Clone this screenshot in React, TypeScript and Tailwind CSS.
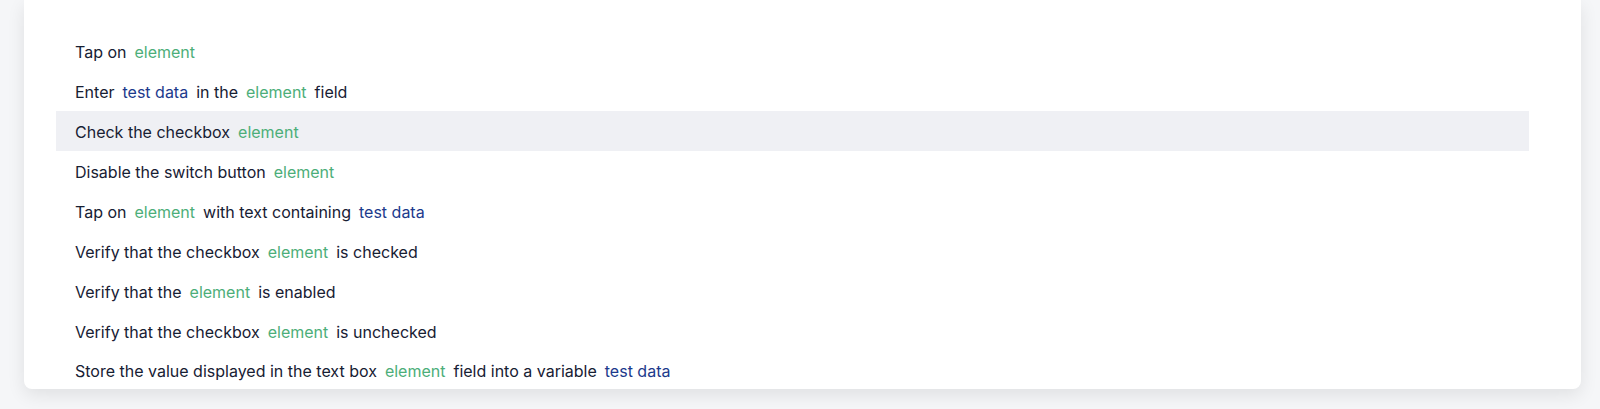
type Part = { t: string; k?: 'el' | 'data' };

const steps: Part[][] = [
  [{ t: 'Tap on' }, { t: 'element', k: 'el' }],
  [{ t: 'Enter' }, { t: 'test data', k: 'data' }, { t: 'in the' }, { t: 'element', k: 'el' }, { t: 'field' }],
  [{ t: 'Check the checkbox' }, { t: 'element', k: 'el' }],
  [{ t: 'Disable the switch button' }, { t: 'element', k: 'el' }],
  [{ t: 'Tap on' }, { t: 'element', k: 'el' }, { t: 'with text containing' }, { t: 'test data', k: 'data' }],
  [{ t: 'Verify that the checkbox' }, { t: 'element', k: 'el' }, { t: 'is checked' }],
  [{ t: 'Verify that the' }, { t: 'element', k: 'el' }, { t: 'is enabled' }],
  [{ t: 'Verify that the checkbox' }, { t: 'element', k: 'el' }, { t: 'is unchecked' }],
  [
    { t: 'Store the value displayed in the text box' },
    { t: 'element', k: 'el' },
    { t: 'field into a variable' },
    { t: 'test data', k: 'data' },
  ],
];

function StepRow({ parts, active, last }: { parts: Part[]; active?: boolean; last?: boolean }) {
  return (
    <div
      className={`flex items-center pl-[19px] pt-px whitespace-pre text-[16px] text-[#172033] ${last ? 'h-[38px]' : 'h-10'} ${
        active ? 'bg-[#eff0f4]' : ''
      }`}
    >
      {parts.map((p, i) => {
        const sep = i > 0 ? ' ' : '';
        if (!p.k) return <span key={i}>{sep + p.t}</span>;
        return (
          <span key={i}>
            {sep}
            <span className={`px-[3.5px] ${p.k === 'el' ? 'text-[#4cae79]' : 'text-[#1c3a8c]'}`}>{p.t}</span>
          </span>
        );
      })}
    </div>
  );
}

export default function App() {
  return (
    <div className="w-[1600px] h-[409px] overflow-hidden bg-[#f5f6f8] font-['Inter',sans-serif]">
      <div className="ml-[24px] mr-[19px] bg-white rounded-b-lg shadow-[0_6px_18px_rgba(0,0,0,0.09)] pt-[31px] pl-8 pr-[52px]">
        {steps.map((parts, i) => (
          <StepRow key={i} parts={parts} active={i === 2} last={i === steps.length - 1} />
        ))}
      </div>
    </div>
  );
}
